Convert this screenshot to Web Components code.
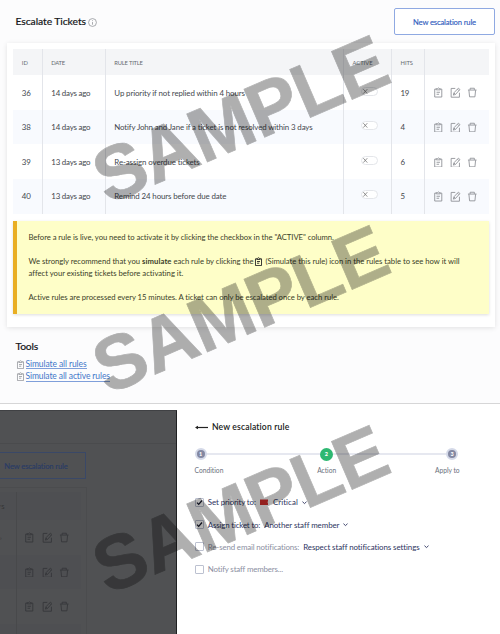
<!DOCTYPE html>
<html lang="en"><head><meta charset="utf-8"><title>Escalate Tickets</title>
<style>html,body{margin:0;padding:0}body{width:500px;height:634px;overflow:hidden;background:#fcfcfd;font-family:Lato,"Open Sans",sans-serif}</style></head>
<body><escalation-page></escalation-page>
<script>
const define=(name,html,init)=>customElements.define(name,class extends HTMLElement{
  connectedCallback(){ if(this.shadowRoot)return; const r=this.attachShadow({mode:'open'}); r.innerHTML=typeof html==='function'?html(this):html; if(init)init(this,r); }
});

// A single line of text whose tracking is adjusted to fill the width in "w".
define('fit-text','<style>:host{display:inline-block;white-space:nowrap}span{display:inline-block}</style><span><slot></slot></span>',(el,r)=>{
  const s=r.querySelector('span'),w=+el.getAttribute('w'),n=el.textContent.length;
  if(w&&n>1){ s.style.letterSpacing=((w-s.getBoundingClientRect().width)/n)+'px'; }
});

const icons={
  clip:'<path d="M3.2 2.2H1.8v8.3h7.4V2.2H7.8"/><path d="M3.4 3V1.7h1.2Q5.5 0 6.4 1.7h1.2V3z"/><path d="M3.7 5.5h3.6M3.7 7.6h2.7"/>',
  edit:'<path d="M5.5 1.5H1.2v9.2h8.7V6"/><path d="M3.5 8.5l.6-2.4L8.8 1.2l1.6 1.5-4.7 5.1zM7.8 2.3l1.5 1.5M4.2 6.3l1.4 1.4"/>',
  bin:'<path d="M1 3.2h9M3.3 3V1.3h4.4V3M2 3.4l.7 6.9h5.6L9 3.4"/>',
  info:'<circle cx="5.5" cy="5.5" r="4.8"/><path d="M5.5 5v3.2M5.5 2.8v1"/>',
  down:'<path d="M3 4.5l2.5 2.3L8 4.5"/>'
};
define('line-icon',el=>`<style>:host{display:inline-block;width:10.5px;height:10.5px;color:#8b8e93}svg{display:block;width:100%;height:100%}</style>
<svg viewBox="0 0 11 11" fill="none" stroke="currentColor" stroke-width="${el.getAttribute('weight')||.9}">${icons[el.getAttribute('name')]}</svg>`);

define('outline-button',`<style>:host{display:flex;align-items:center;justify-content:center;box-sizing:border-box;width:101px;height:27px;border:1px solid #8fa9e2;border-radius:2px;color:#3562c0;font-weight:500;font-size:7.6px;background:#fff;-webkit-text-stroke:.1px}</style><slot></slot>`);

define('toggle-switch',`<style>:host{display:block;box-sizing:border-box;width:17px;height:9px;border:1px solid #e4e6ea;border-radius:5px;background:#fff}svg{display:block;width:8px;height:7px}</style>
<svg viewBox="0 0 8 7" fill="none" stroke="#777" stroke-width=".8"><path d="M1.3 1.2l4 4.4M5.3 1.2l-4 4.4"/></svg>`);

define('rule-row',el=>{
 const a=n=>el.getAttribute(n), head=el.hasAttribute('head');
 const c=(n)=>a(n)?`<fit-text w="${a(n).split('|')[1]}">${a(n).split('|')[0]}</fit-text>`:'';
 return `<style>:host{display:grid;grid-template-columns:29.5px 63px 238px 48px 33px 1fr;height:34.67px;color:#44474d;font-size:7.9px}
 :host([head]){height:26px;background:#f4f5f7;font-size:5.8px;color:#666a70}:host([alt]){background:#f8fafe}
 div{box-sizing:border-box;display:flex;align-items:center;padding-left:8.8px;padding-top:${head?0:.4}px;border-right:1px solid #e3e5ea}
 div:last-child{border:0;gap:6.9px;padding-left:8.2px}.act{padding-left:${head?9:17.5}px;padding-bottom:${head?0:3}px}.hits{padding-left:9px}</style>
 <div>${c('n')}</div><div>${c('date')}</div><div>${c('rule')}</div><div class="act">${head?c('active'):'<toggle-switch></toggle-switch>'}</div><div class="hits">${c('hits')}</div>
 <div>${head?'':'<line-icon name="clip"></line-icon><line-icon name="edit"></line-icon><line-icon name="bin"></line-icon>'}</div>`});

define('note-box',`<style>:host{display:block;box-sizing:border-box;height:93px;margin-top:7px;border-left:4px solid #e9ae22;background:#fefec8;box-shadow:0 1px 3px #0002;padding:11.5px 0 0 11.5px;font-size:7.7px;line-height:11.9px;color:#3b4129}
 p{margin:0 0 11.9px;height:11.9px;white-space:nowrap}.two{height:23.8px}.ln{display:flex;height:11.9px;align-items:center}b{font-weight:700}line-icon{color:#222;width:9px;height:9px;margin:0 2.5px 0 .5px}fit-text{white-space:pre}</style>
 <p><fit-text w="305.5">Before a rule is live, you need to activate it by clicking the checkbox in the "ACTIVE" column.</fit-text></p>
 <p class="two"><span class="ln"><fit-text w="113.5">We strongly recommend that you </fit-text><b><fit-text w="29.5">simulate</fit-text></b><fit-text w="82"> each rule by clicking the</fit-text><line-icon name="clip" weight="1.1"></line-icon><fit-text w="194">(Simulate this rule) icon in the rules table to see how it will</fit-text></span>
 <span class="ln"><fit-text w="155">affect your existing tickets before activating it.</fit-text></span></p>
 <p><fit-text w="310.5">Active rules are processed every 15 minutes. A ticket can only be escalated once by each rule.</fit-text></p>`);

define('tickets-view',`<style>:host{display:flow-root;height:403px;box-sizing:content-box;border-bottom:1px solid #d6d6d7;background:#fcfcfd}
 header{display:flex;height:43px;box-sizing:border-box;padding:8px 5px 0 15.5px;justify-content:space-between}
 h1,h2{font-size:10.3px;font-weight:500;margin:0;color:#17191c;-webkit-text-stroke:.15px}h1{display:flex;align-items:center;height:26px}h1 line-icon{width:9px;height:9px;margin:2px 0 0 2px}
 .card{margin:0 5.5px 0 7px;padding:6px;height:284px;box-sizing:border-box;background:#fff;box-shadow:0 1px 5px #0000001c}
 .tools{padding:12px 0 0 15.5px}h2{line-height:14px;margin-bottom:5px}.tools div{display:flex;align-items:center;height:12.4px}.tools line-icon{width:9px;height:9px;margin-right:1px}
 a{color:#4376c9;font-size:8.5px;line-height:10px;border-bottom:1px solid #7f9fda;height:9.5px;display:block}</style>
 <header><h1><fit-text w="70.5">Escalate Tickets</fit-text><line-icon name="info"></line-icon></h1><outline-button><fit-text w="63">New escalation rule</fit-text></outline-button></header>
 <div class="card"><rule-row head n="ID|6" date="DATE|13.5" rule="RULE TITLE|28.5" active="ACTIVE|20" hits="HITS|12.5"></rule-row>
 <rule-row n="36|9" date="14 days ago|39" rule="Up priority if not replied within 4 hours|130.5" hits="19|8.5"></rule-row>
 <rule-row alt n="38|9" date="14 days ago|39" rule="Notify John and Jane if a ticket is not resolved within 3 days|198.5" hits="4|4.5"></rule-row>
 <rule-row n="39|9" date="13 days ago|39" rule="Re-assign overdue tickets|85.5" hits="6|4.5"></rule-row>
 <rule-row alt n="40|9" date="13 days ago|39" rule="Remind 24 hours before due date|112" hits="5|4.5"></rule-row>
 <note-box></note-box></div>
 <section class="tools"><h2><fit-text w="22.5">Tools</fit-text></h2><div><line-icon name="clip"></line-icon><a><fit-text w="61">Simulate all rules</fit-text></a></div><div><line-icon name="clip"></line-icon><a><fit-text w="84.5">Simulate all active rules</fit-text></a></div></section>`);

define('dimmed-backdrop',`<style>:host{display:block;width:177px;height:224px;background:#505153;box-sizing:border-box;border-right:1px solid #1f2022;border-top:1px solid #404144;overflow:hidden}
 .bar{height:33px;box-sizing:border-box;border-bottom:1px solid #4a4b4d}
 outline-button{background:none;width:86px;margin-top:8px;border-color:#3a4867;border-left:0;border-radius:0;color:#2a3c66;padding-right:13px}
 .table{margin-top:8px;width:87px;height:154px;border:solid #4b4c4e;border-width:1px 1px 0 0;box-sizing:border-box;padding-top:4px}
 .row{display:grid;grid-template-columns:16.5px 1fr;height:34.67px;width:81px}.row.h{height:28px;background:#4d4e51}.row:nth-child(odd){background:#4e4f52}
 .row>div{display:flex;align-items:center;border-right:1px solid #48494b;font-size:6px;color:#333}.row>div:last-child{border:0;padding-left:7.7px;gap:6.9px;align-items:center}line-icon{color:#353639}</style>
 <div class="bar"></div><outline-button><fit-text w="63.5">New escalation rule</fit-text></outline-button>
 <div class="table"><div class="row h"><div>'S</div><div></div></div></div>`,(el,r)=>{
  const t=r.querySelector('.table');
  for(let i=0;i<4;i++){const d=document.createElement('div');d.className='row';d.innerHTML=`<div>${i?'':'›'}</div><div>${i<3?'<line-icon name="clip"></line-icon><line-icon name="edit"></line-icon><line-icon name="bin"></line-icon>':''}</div>`;t.append(d);}
 });

define('step-dot',el=>`<style>:host{display:flex;box-sizing:border-box;width:12px;height:12px;border:2px solid #d4d9e8;border-radius:50%;background:#8388a2;color:#fff;align-items:center;justify-content:center;font-size:5.5px;font-weight:900}
 :host([current]){width:13px;height:13px;background:#2eb872;border-color:#2eb872}</style><slot></slot>`);

define('check-line',el=>`<style>:host{display:flex;align-items:center;height:14px;color:#2d335e;font-size:7.9px}
 i{box-sizing:border-box;width:9px;height:9px;border:1px solid #bcc1d0;border-radius:1px;margin-right:4.3px;background:#fff}
 svg{display:block;width:7px;height:7px}:host([off]) .l{color:#8b8fa2}line-icon{color:#2d335e;width:9px;height:9px;margin-left:2px}.flag{width:8.5px;height:6.5px;margin:0 5px 0 -.3px}.v{display:flex;align-items:center;margin-left:4px}</style>
 <i>${el.hasAttribute('off')?'':'<svg viewBox="0 0 7 7" fill="none" stroke="#15182b" stroke-width="1.3"><path d="M1 3.6L2.7 5.4 6 1.5"/></svg>'}</i><span class="l"><fit-text w="${el.getAttribute('lw')}">${el.getAttribute('label')}</fit-text></span>
 ${el.hasAttribute('value')?`<span class="v">${el.hasAttribute('flag')?'<svg class="flag" viewBox="0 0 9 6"><path d="M0 0H9L8 3 9 6H0Z" fill="#d8302e"/></svg>':''}<fit-text w="${el.getAttribute('vw')}">${el.getAttribute('value')}</fit-text><line-icon name="down" weight="1.1"></line-icon></span>`:''}`);

define('rule-drawer',`<style>:host{display:block;box-sizing:border-box;height:224px;padding:11px 0 0 17.5px;flex:1;background:#fff}
 h3{display:flex;align-items:center;height:12px;margin:0;font-size:8.6px;font-weight:600;color:#191b20}h3 svg{width:13px;height:5px;margin-right:4.5px}
 .steps{display:flex;align-items:center;height:14px;width:263.5px;margin-top:14px}.steps span{flex:1;height:1.5px;background:#e6e8f0}
 .names{display:flex;width:265px;margin-top:3.7px;font-size:6.7px;line-height:10px;color:#6a6f7c}.names fit-text:nth-child(2){margin-left:93.8px}.names fit-text:last-child{margin-left:auto}
 .checks{display:grid;gap:8.2px;padding-top:20.8px}</style>
 <h3><svg viewBox="0 0 13 5"><path d="M1 2.5H13" stroke="#222" stroke-width="1.2"/><path d="M0 2.5L3 .7V4.3z" fill="#222"/></svg><fit-text w="77.5">New escalation rule</fit-text></h3>
 <div class="steps"><step-dot>1</step-dot><span></span><step-dot current>2</step-dot><span></span><step-dot>3</step-dot></div>
 <div class="names"><fit-text w="29">Condition</fit-text><fit-text w="19">Action</fit-text><fit-text w="24.5">Apply to</fit-text></div>
 <div class="checks"><check-line label="Set priority to:" lw="48" value="Critical" vw="25" flag></check-line><check-line label="Assign ticket to:" lw="52.5" value="Another staff member" vw="75"></check-line>
 <check-line off label="Re-send email notifications:" lw="91.5" value="Respect staff notifications settings" vw="116"></check-line><check-line off label="Notify staff members..." lw="75"></check-line></div>`);

// Rotated translucent stamp repeated down the page.
define('sample-stamp',`<style>:host{position:absolute;inset:0;pointer-events:none}svg{display:block;opacity:.31}text{font:bold 76px "Liberation Sans",Arial,sans-serif;fill:#000;stroke:#000;stroke-width:.7px}</style>
 <svg width="500" height="634">${[0,190,390].map(y=>`<text transform="translate(107.6 ${205+y}) rotate(-23.35)" textLength="312" lengthAdjust="spacing">SAMPLE</text>`).join('')}</svg>`);

define('escalation-page',`<style>:host{display:block;position:relative;width:500px;height:634px;overflow:hidden;background:#fff}.lower{display:flex;margin-top:6px}</style>
 <tickets-view></tickets-view><div class="lower"><dimmed-backdrop></dimmed-backdrop><rule-drawer></rule-drawer></div><sample-stamp></sample-stamp>`);
</script></body></html>
